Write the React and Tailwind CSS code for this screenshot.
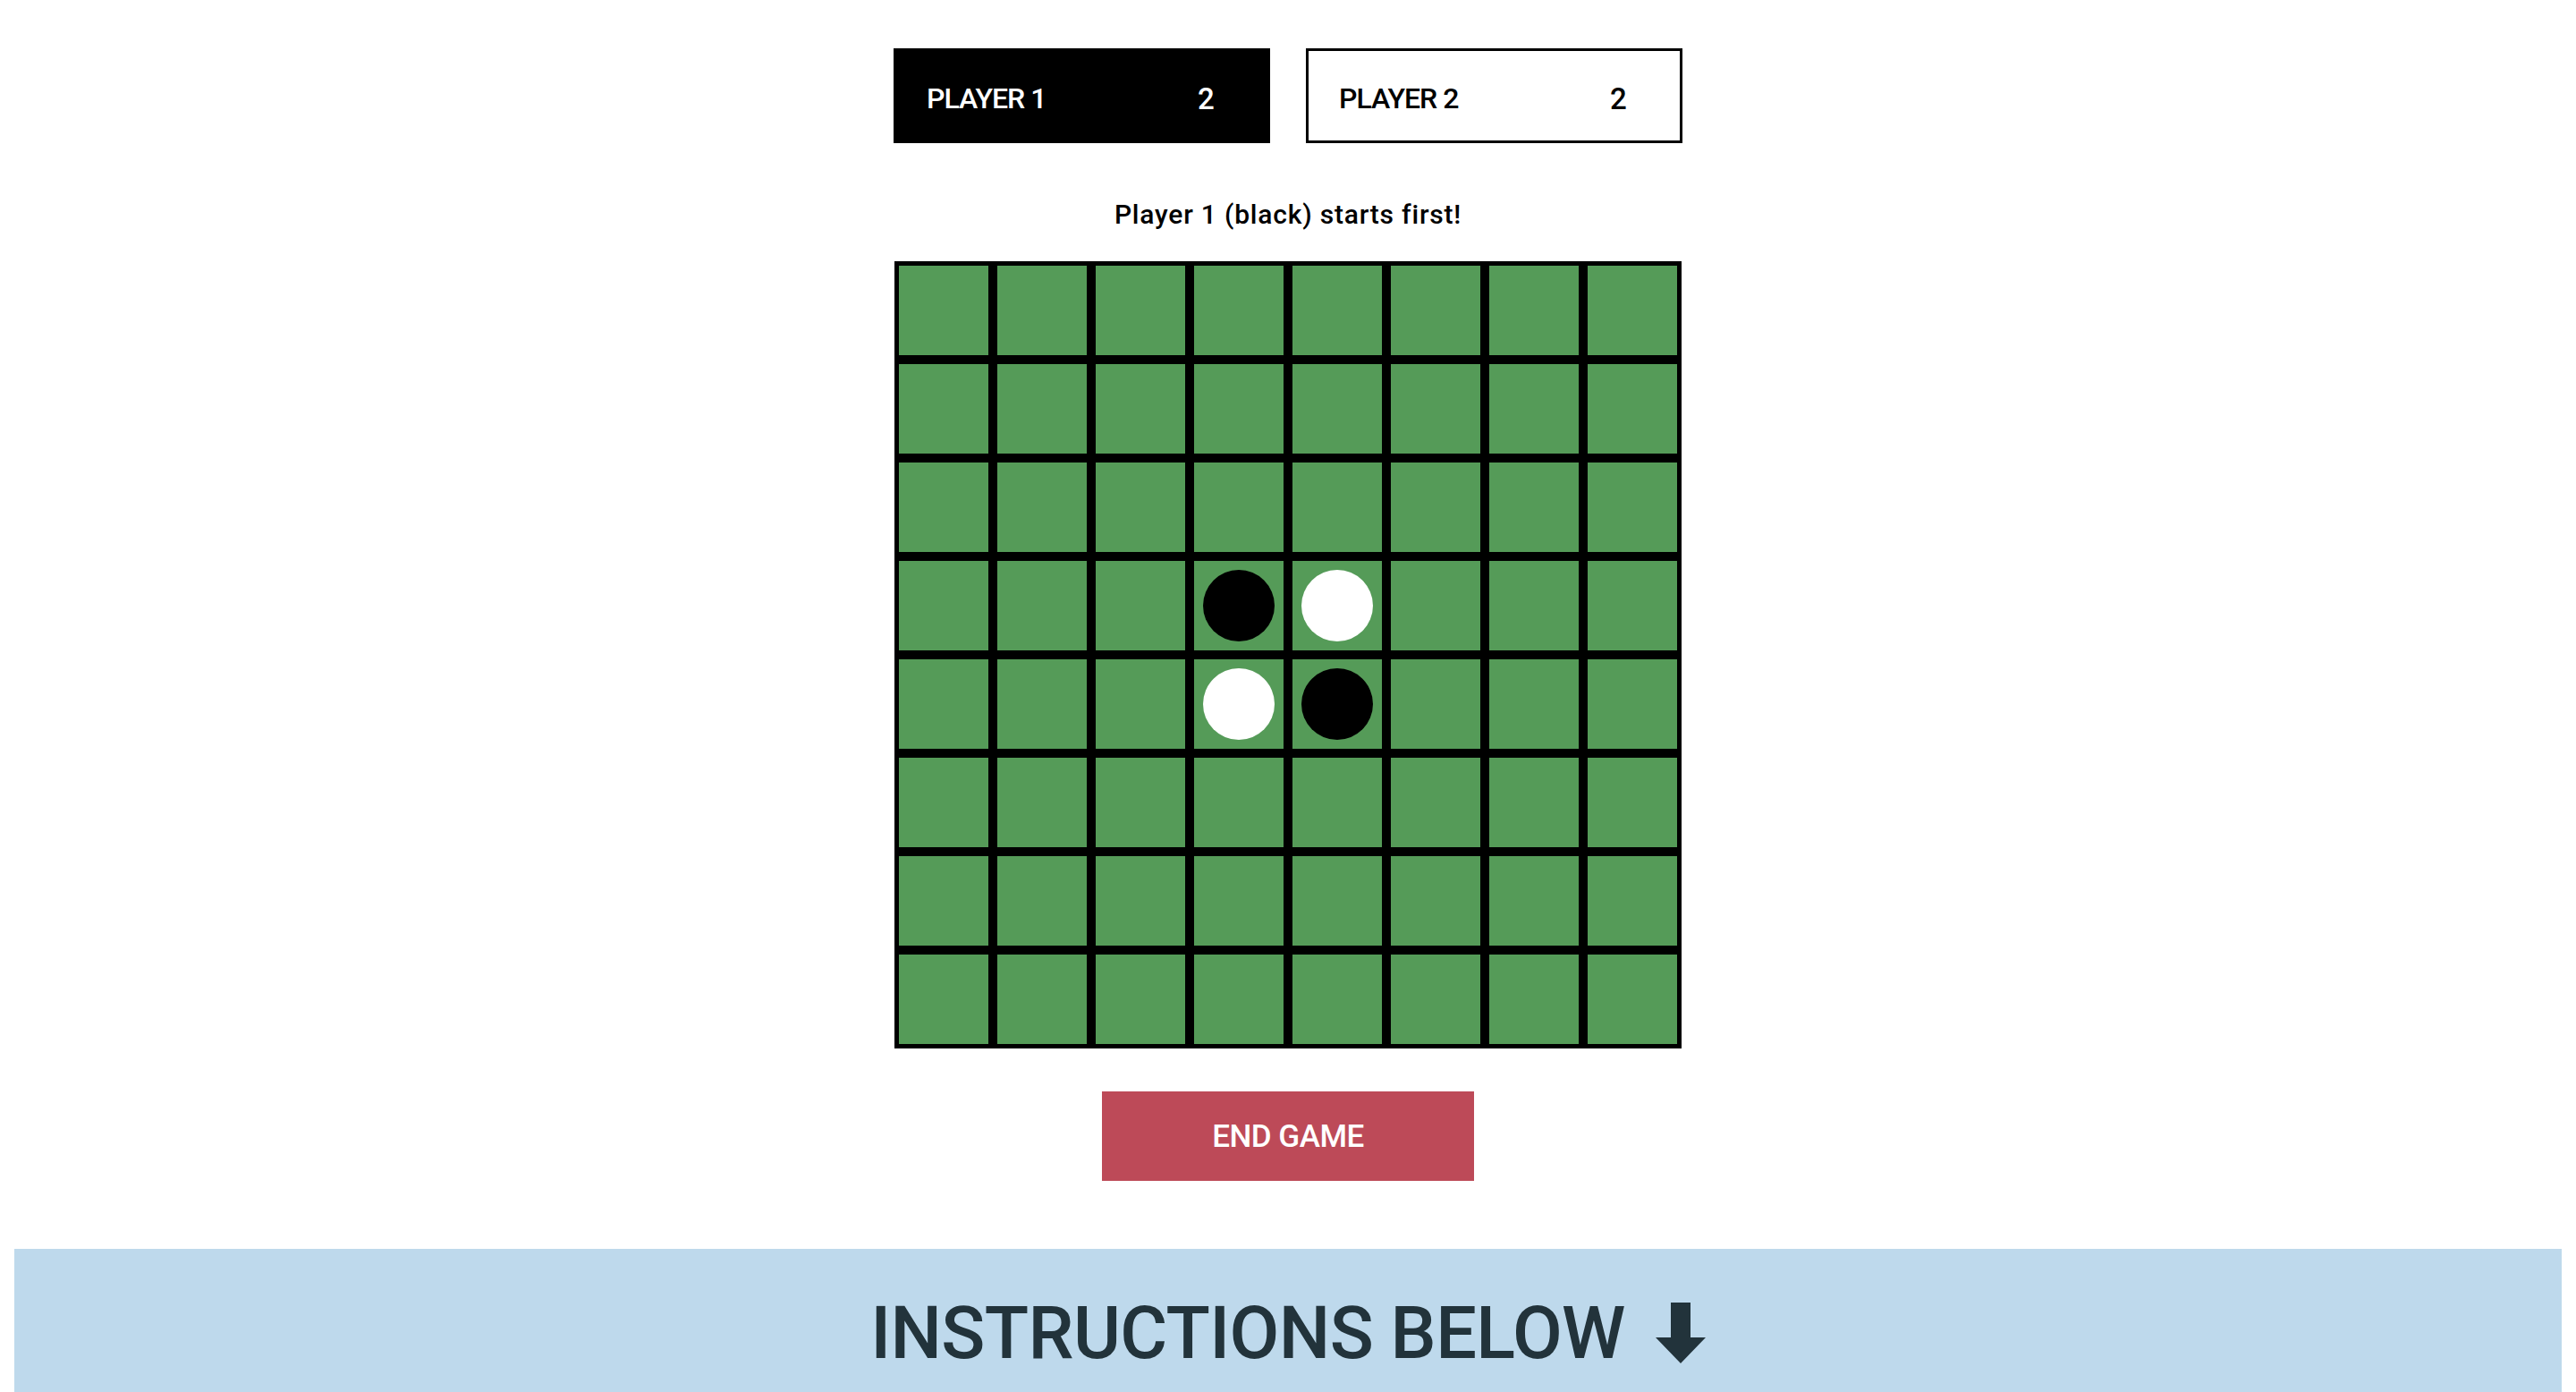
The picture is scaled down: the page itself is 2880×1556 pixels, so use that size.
import { useState } from 'react';

const SIZE = 8;

function initialBoard() {
  const b = Array.from({ length: SIZE }, () => Array(SIZE).fill(null));
  b[3][3] = 'black';
  b[3][4] = 'white';
  b[4][3] = 'white';
  b[4][4] = 'black';
  return b;
}

function ScoreCard({ label, score, active }) {
  return (
    <div
      className={`flex-1 h-[106px] border-[3px] border-black flex items-center pl-[34px] pt-[6px] ${
        active ? 'bg-black text-white' : 'bg-white text-black'
      }`}
    >
      <span className="w-[303px] text-[32px] leading-none font-medium tracking-[-1px] whitespace-pre">{label}</span>
      <span className="text-[33px] leading-none font-medium">{score}</span>
    </div>
  );
}

export default function App() {
  const [board] = useState(initialBoard);

  const count = (color) => board.flat().filter((c) => c === color).length;

  return (
    <div className="min-h-screen bg-white font-['Roboto','Liberation_Sans',sans-serif]">
      <div className="flex flex-col items-center pt-[54px]">
        <div className="w-[882px] flex gap-[40px]">
          <ScoreCard label="PLAYER 1" score={count('black')} active />
          <ScoreCard label="PLAYER 2" score={count('white')} />
        </div>

        <p className="mt-[62px] text-[30px] leading-[36px] font-medium tracking-[0.8px] text-black">
          Player 1 (black) starts first!
        </p>

        <div className="mt-[34px] grid grid-cols-8">
          {board.map((row, r) =>
            row.map((cell, c) => (
              <div
                key={`${r}-${c}`}
                className="w-[110px] h-[110px] border-[5px] border-black bg-[#559b58] flex items-center justify-center"
              >
                {cell && (
                  <div
                    className={`w-20 h-20 rounded-full ${cell === 'black' ? 'bg-black' : 'bg-white'}`}
                  />
                )}
              </div>
            ))
          )}
        </div>

        <button className="mt-[48px] w-[416px] h-[100px] bg-[#bd4a58] text-white text-[35px] leading-none font-medium tracking-[-0.5px]">
          END GAME
        </button>
      </div>

      <div className="mt-[76px] mx-[16px] h-[200px] bg-[#bed9ec] flex justify-center pt-[54px]">
        <div className="flex items-center gap-[34px] h-[81px]">
          <span className="text-[81px] leading-none font-medium tracking-[-0.6px] text-[#22333b]">
            INSTRUCTIONS BELOW
          </span>
          <svg width="56" height="69" viewBox="0 0 56 69" className="text-[#22333b]">
            <path d="M17 0 H39 V39 H56 L28 68 L0 39 H17 Z" fill="currentColor" />
          </svg>
        </div>
      </div>
    </div>
  );
}
